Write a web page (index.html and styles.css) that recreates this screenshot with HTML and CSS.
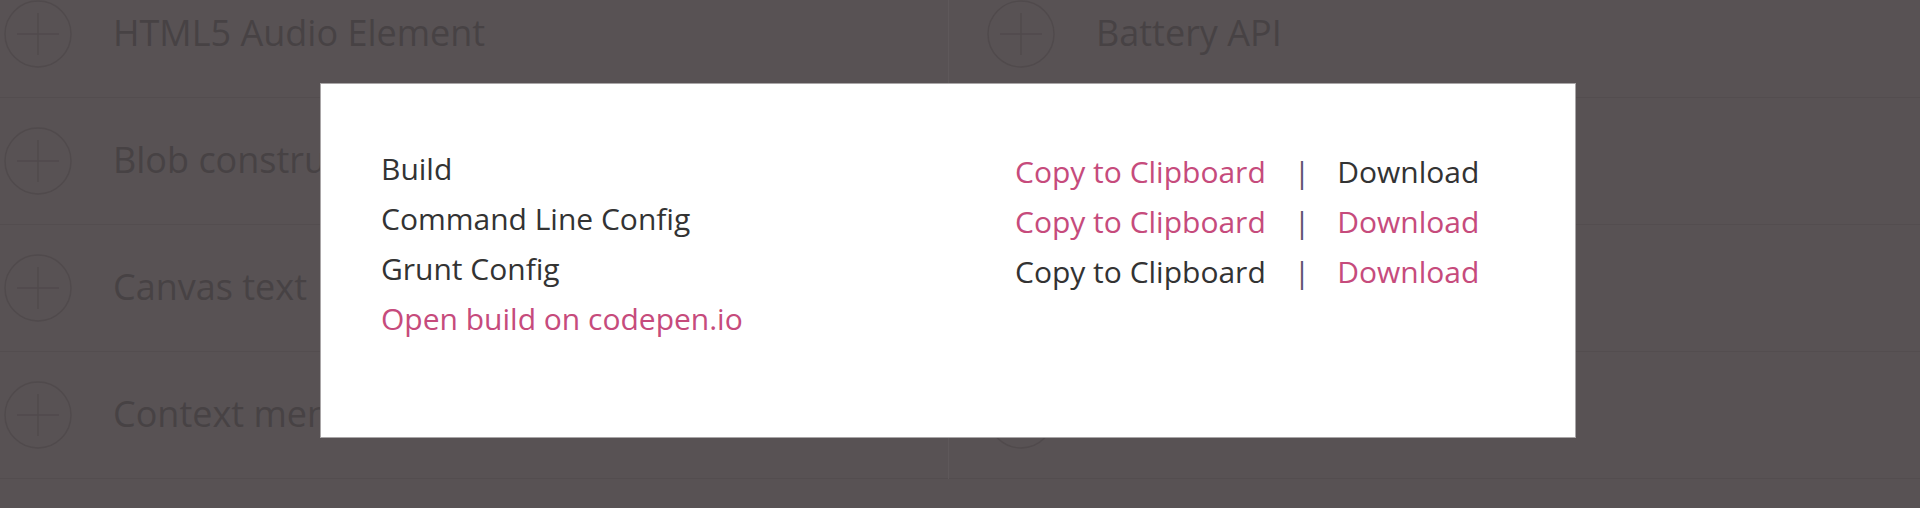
FILE: index.html
```html
<!DOCTYPE html>
<html lang="en">
<head>
<meta charset="utf-8">
<title>Build</title>
<link rel="stylesheet" href="styles.css">
</head>
<body>
<div class="page">
  <div class="col col-left">
    <div class="row"><svg class="plus" viewBox="0 0 68 68"><circle cx="34" cy="34" r="33"/><path d="M13 34H55M34 13V55"/></svg><span class="name">HTML5 Audio Element</span></div>
    <div class="row"><svg class="plus" viewBox="0 0 68 68"><circle cx="34" cy="34" r="33"/><path d="M13 34H55M34 13V55"/></svg><span class="name">Blob constructor</span></div>
    <div class="row"><svg class="plus" viewBox="0 0 68 68"><circle cx="34" cy="34" r="33"/><path d="M13 34H55M34 13V55"/></svg><span class="name">Canvas text</span></div>
    <div class="row"><svg class="plus" viewBox="0 0 68 68"><circle cx="34" cy="34" r="33"/><path d="M13 34H55M34 13V55"/></svg><span class="name">Context menus</span></div>
  </div>
  <div class="col col-right">
    <div class="row"><svg class="plus" viewBox="0 0 68 68"><circle cx="34" cy="34" r="33"/><path d="M13 34H55M34 13V55"/></svg><span class="name">Battery API</span></div>
    <div class="row"><svg class="plus" viewBox="0 0 68 68"><circle cx="34" cy="34" r="33"/><path d="M13 34H55M34 13V55"/></svg><span class="name">Blob URLs</span></div>
    <div class="row"><svg class="plus" viewBox="0 0 68 68"><circle cx="34" cy="34" r="33"/><path d="M13 34H55M34 13V55"/></svg><span class="name">Canvas winding</span></div>
    <div class="row"><svg class="plus" viewBox="0 0 68 68"><circle cx="34" cy="34" r="33"/><path d="M13 34H55M34 13V55"/></svg><span class="name">Content Editable</span></div>
  </div>
</div>

<div class="modal">
  <ul class="labels">
    <li>Build</li>
    <li>Command Line Config</li>
    <li>Grunt Config</li>
    <li><a class="link" href="#">Open build on codepen.io</a></li>
  </ul>
  <ul class="actions">
    <li><a class="link" href="#">Copy to Clipboard</a><span class="sep">|</span><span class="plain">Download</span></li>
    <li><a class="link" href="#">Copy to Clipboard</a><span class="sep">|</span><a class="link" href="#">Download</a></li>
    <li><span class="plain">Copy to Clipboard</span><span class="sep">|</span><a class="link" href="#">Download</a></li>
  </ul>
</div>
</body>
</html>
```

FILE: styles.css
```css
html, body {
  margin: 0;
  padding: 0;
  height: 100%;
  overflow: hidden;
}

body {
  background: #585254;
  font-family: "Open Sans", "Noto Sans", sans-serif;
  position: relative;
}

.page {
  display: grid;
  grid-template-columns: 949px 1fr;
  margin-top: -29px;
}

.col-left {
  border-right: 1px solid #5e585a;
}

.row {
  display: flex;
  align-items: center;
  gap: 41px;
  height: 126px;
  border-bottom: 1px solid #534d4f;
}

.col-left .row {
  padding-left: 4px;
}

.col-right .row {
  padding-left: 38px;
}

.plus {
  width: 68px;
  height: 68px;
  flex: none;
  fill: none;
  stroke: #504a4c;
  stroke-width: 1.4;
}

.name {
  font-size: 36px;
  color: #474244;
  margin-top: -4px;
}

.modal {
  position: absolute;
  left: 320px;
  top: 83px;
  width: 1254px;
  height: 353px;
  background: #fff;
  border: 1px solid #a9a6a7;
  box-sizing: content-box;
  display: grid;
  grid-template-columns: 694px 1fr;
}

.labels,
.actions {
  list-style: none;
  margin: 0;
  padding: 0;
  font-size: 30px;
  line-height: 50px;
  color: #333;
}

.labels {
  padding: 60px 0 0 60px;
}

.actions {
  padding-top: 63px;
}

.actions li {
  display: flex;
}

.link {
  color: #c64b7c;
  text-decoration: none;
}

.plain {
  color: #333;
}

.sep {
  color: #5f5570;
  margin: 0 27px 0 28px;
}
```
